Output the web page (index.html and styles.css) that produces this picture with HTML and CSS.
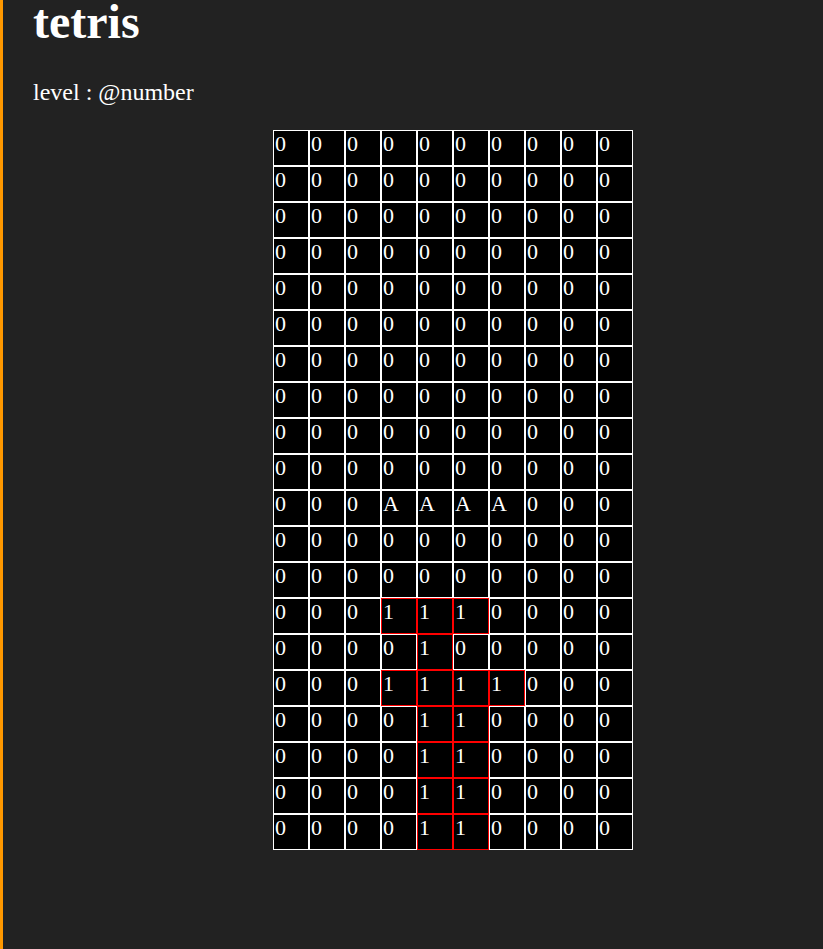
FILE: index.html
```
<!DOCTYPE html>
<html lang="en">
<head>
  <meta charset="UTF-8" />
  <meta name="viewport" content="width=device-width, initial-scale=1.0"/>
  <title>tetris</title>
  <link rel="stylesheet" href="styles.css">
</head>
<body>

<h1 class="title">tetris</h1>
<p class="level">level : @number</p>

<div class="board" id="board">
  <!-- cells are filled in below -->
</div>

<script>
  const rows = [
    "0000000000",
    "0000000000",
    "0000000000",
    "0000000000",
    "0000000000",
    "0000000000",
    "0000000000",
    "0000000000",
    "0000000000",
    "0000000000",
    "000AAAA000",
    "0000000000",
    "0000000000",
    "0001110000",
    "0000100000",
    "0001111000",
    "0000110000",
    "0000110000",
    "0000110000",
    "0000110000"
  ];

  const board = document.getElementById("board");

  rows.forEach(row => {
    row.split("").forEach(v => {
      const cell = document.createElement("div");
      cell.className = v === "1" ? "cell filled" : "cell";
      cell.innerText = v;
      board.appendChild(cell);
    });
  });
</script>

</body>
</html>
```

FILE: styles.css
```
html, body {
  height: 100%;
}
body {
  margin: 0;
  padding: 0 0 0 30px;
  background: #222222;
  border-left: 3px solid #ff9800;
  color: white;
  font-family: "Liberation Serif", "Times New Roman", serif;
  box-sizing: border-box;
}
.title {
  margin: 0;
  font-size: 48px;
  line-height: 44px;
}
.level {
  margin: 34px 0 0 0;
  font-size: 24px;
  line-height: 28px;
}
.board {
  display: grid;
  grid-template-columns: repeat(10, 36px);
  grid-auto-rows: 36px;
  width: 360px;
  margin: 24px 0 0 240px;
}
.cell {
  box-sizing: border-box;
  border: 1px solid white;
  background: black;
  padding-left: 1px;
  font-size: 22px;
  line-height: 26px;
}
.cell.filled {
  border-color: red;
}
```
